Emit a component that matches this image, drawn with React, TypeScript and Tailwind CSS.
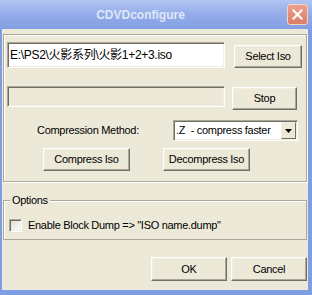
import React from 'react'

const font = "font-['Liberation_Sans','Noto_Sans_CJK_SC',sans-serif]"

function Btn({ label, className = '' }: { label: string; className?: string }) {
  return (
    <div
      className={`flex h-[23px] items-center justify-center whitespace-nowrap border border-t-white border-l-white border-b-[#716f64] border-r-[#716f64] bg-[#ece9d8] text-black shadow-[inset_-1px_-1px_0_#aca899,inset_1px_1px_0_#f1efe2] ${className}`}
    >
      {label}
    </div>
  )
}

const sunken =
  'border border-t-[#aca899] border-l-[#aca899] border-b-white border-r-white shadow-[inset_1px_1px_0_#716f64,inset_-1px_-1px_0_#f1efe2]'

export default function App() {
  return (
    <div className={`flex h-[295px] w-[312px] flex-col bg-[#7e9de3] ${font}`}>
      {/* title bar */}
      <div className="flex h-[29px] shrink-0 items-center bg-gradient-to-b from-[#b3c5f1] via-[#93ace9] to-[#829fe4]">
        <div className="flex-1 pr-[6px] text-center text-[12px] font-bold text-[#dfe7f8]">CDVDconfigure</div>
        <div className="mr-[4px] flex h-[21px] w-[21px] items-center justify-center rounded-[3px] border border-[#f3d2c8] bg-gradient-to-b from-[#eba08f] to-[#dc7c67]">
          <svg width="11" height="11" viewBox="0 0 11 11">
            <path d="M1.5 1.5 L9.5 9.5 M9.5 1.5 L1.5 9.5" stroke="#fff" strokeWidth="2.2" strokeLinecap="square" />
          </svg>
        </div>
      </div>

      {/* body */}
      <div className="mx-[2px] mb-[5px] mr-[4px] flex flex-1 flex-col bg-[#ece9d8] text-[11px] tracking-[-0.3px] text-black">
        <div className="mx-[1px] mt-[5px] flex h-[148px] flex-col border border-[#aca899] shadow-[inset_1px_1px_0_#fff,1px_1px_0_#fff]">
          <div className="ml-[3px] mt-[7px] flex items-start">
            <div className={`flex h-[26px] w-[218px] items-center whitespace-nowrap bg-white pl-[2px] text-[12px] ${sunken}`}>
              E:\PS2\火影系列\火影1+2+3.iso
            </div>
            <Btn label="Select Iso" className="ml-[9px] mt-[3px] w-[68px]" />
          </div>

          <div className="ml-[3px] mt-[18px] flex items-start">
            <div className={`h-[21px] w-[218px] bg-[#ece9d8] ${sunken}`} />
            <Btn label="Stop" className="ml-[7px] mt-[1px] w-[65px]" />
          </div>

          <div className="mt-[10px] flex items-center">
            <div className="ml-[33px] w-[136px] whitespace-nowrap">Compression Method:</div>
            <div className={`flex h-[21px] w-[125px] items-center bg-white ${sunken}`}>
              <span className="flex-1 whitespace-nowrap pl-[2px]">.Z&nbsp;&nbsp;- compress faster</span>
              <div className="mr-[1px] flex h-[17px] w-[15px] items-center justify-center border border-t-[#f1efe2] border-l-[#f1efe2] border-b-[#716f64] border-r-[#716f64] bg-[#ece9d8]">
                <svg width="7" height="4" viewBox="0 0 7 4">
                  <path d="M0 0 H7 L3.5 4 Z" fill="#000" />
                </svg>
              </div>
            </div>
          </div>

          <div className="mt-[7px] flex">
            <Btn label="Compress Iso" className="ml-[39px] w-[87px]" />
            <Btn label="Decompress Iso" className="ml-[33px] w-[87px]" />
          </div>
        </div>

        <fieldset className="mx-[1px] mt-[12px] h-[46px] border border-[#aca899] shadow-[inset_1px_1px_0_#fff]">
          <legend className="ml-[6px] bg-[#ece9d8] px-[2px] leading-[13px]">Options</legend>
          <div className="mt-[10px] flex items-center">
            <div className={`ml-[5px] h-[13px] w-[13px] bg-gradient-to-br from-[#dcdcd7] to-white ${sunken}`} />
            <span className="ml-[6px] whitespace-nowrap">Enable Block Dump =&gt; "ISO name.dump"</span>
          </div>
        </fieldset>

        <div className="mr-[1px] mt-[17px] flex justify-end gap-[4px]">
          <Btn label="OK" className="h-[24px] w-[76px]" />
          <Btn label="Cancel" className="h-[24px] w-[76px]" />
        </div>
      </div>
    </div>
  )
}
